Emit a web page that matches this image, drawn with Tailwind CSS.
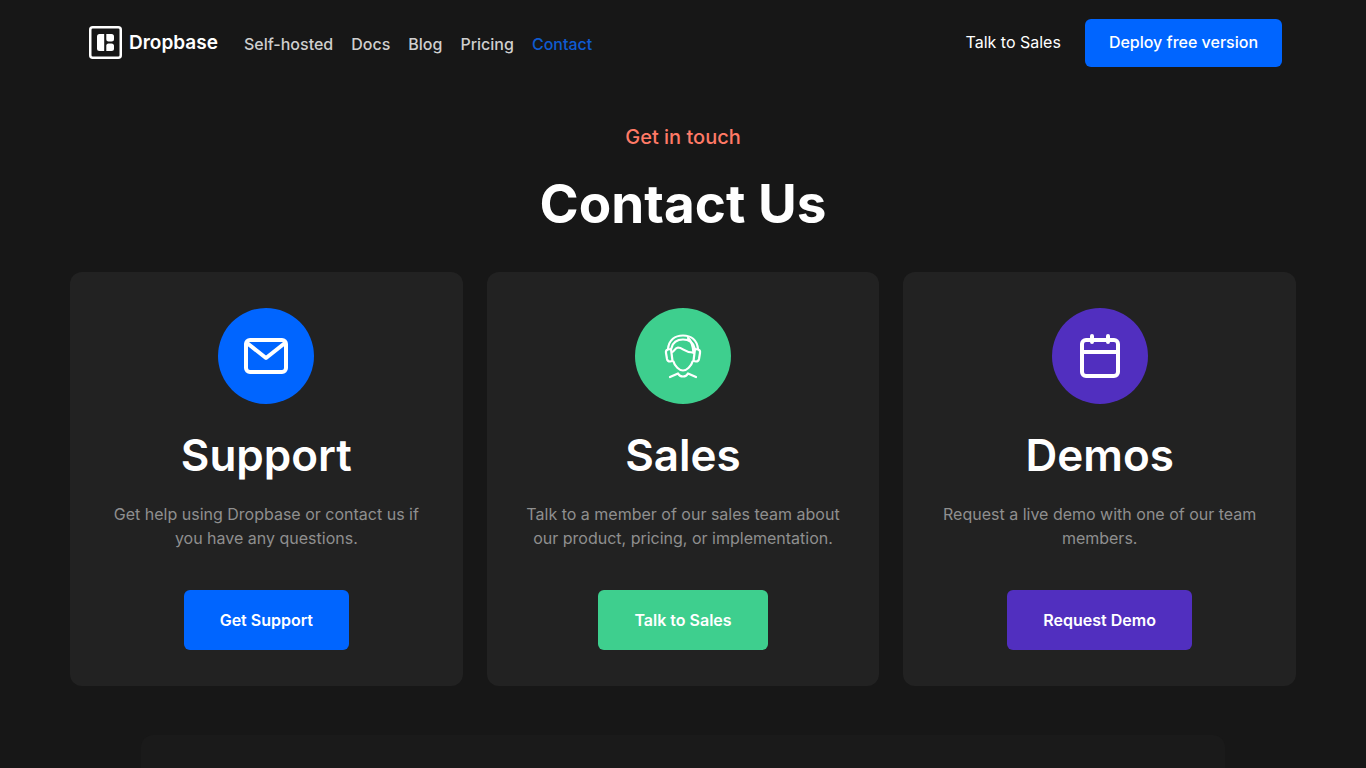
<!DOCTYPE html>
<html lang="en">
<head>
    <meta charset="UTF-8">
    <meta name="viewport" content="width=device-width, initial-scale=1.0">
    <title>Contact Us - Dropbase</title>
    <script src="https://cdn.jsdelivr.net/npm/@tailwindcss/browser@4"></script>
</head>
<body class="flex min-h-screen flex-col bg-[#171717] font-['Inter',sans-serif] text-white">
    <!-- Navigation -->
    <header class="flex items-center justify-between pt-[19px] pr-[84px] pl-[89px]">
        <div class="flex items-center pb-0.5">
            <a href="#" class="flex items-center gap-[7px] text-[19px] font-semibold">
                <svg class="size-[33px]" viewBox="0 0 33 33" fill="none" aria-hidden="true">
                    <rect x="1.25" y="1.25" width="30.5" height="30.5" rx="2.5" stroke="#fff" stroke-width="2.5" />
                    <path d="M10.5 8H15.2V25H10.5Q8 25 8 22.5V10.5Q8 8 10.5 8Z" fill="#fff" />
                    <path d="M17.3 8H22.5Q25 8 25 10.5V13Q25 15.5 22.5 15.5H19.5Q17.3 15.5 17.3 13.5Z" fill="#fff" />
                    <path d="M17.3 25H22.5Q25 25 25 22.5V20Q25 17.5 22.5 17.5H19.5Q17.3 17.5 17.3 19.5Z" fill="#fff" />
                </svg>
                <span class="pt-[3px]">Dropbase</span>
            </a>
            <nav class="ml-[26px] flex gap-[18px] pt-[3px] font-medium text-[#cfcfcf]">
                <a href="#">Self-hosted</a>
                <a href="#">Docs</a>
                <a href="#">Blog</a>
                <a href="#">Pricing</a>
                <a href="#" class="text-[#0f5bd0]">Contact</a>
            </nav>
        </div>
        <div class="flex items-center gap-6">
            <a href="#" class="pb-0.5">Talk to Sales</a>
            <button type="button" class="h-12 rounded-md bg-[#0065ff] px-6 pb-0.5 font-medium">Deploy free version</button>
        </div>
    </header>

    <main class="flex flex-1 flex-col">
        <div class="pt-[54px] text-center">
            <p class="text-xl leading-8 font-medium text-[#ff7a66]">Get in touch</p>
            <h1 class="mt-[18px] text-[53px] leading-[66px] font-bold">Contact Us</h1>
        </div>

        <!-- Contact options -->
        <div class="mt-[35px] grid grid-cols-3 gap-6 px-[70px]">
            <section class="flex flex-col items-center rounded-xl bg-[#222222] p-9 text-center">
                <div class="flex size-24 items-center justify-center rounded-full bg-[#0065ff]">
                    <svg class="size-12" viewBox="0 0 48 48" fill="none" stroke="#fff" stroke-width="4" stroke-linejoin="round" aria-hidden="true">
                        <rect x="4" y="8" width="40" height="32" rx="4" />
                        <path d="M5 11L24 26L43 11" />
                    </svg>
                </div>
                <h2 class="mt-6 text-[44px] leading-[54px] font-semibold">Support</h2>
                <p class="mt-5 text-[#8f8f8f]">Get help using Dropbase or contact us if you have any questions.</p>
                <button type="button" class="mt-10 h-[60px] rounded-md bg-[#0065ff] px-9 font-semibold">Get Support</button>
            </section>

            <section class="flex flex-col items-center rounded-xl bg-[#222222] p-9 text-center">
                <div class="flex size-24 items-center justify-center rounded-full bg-[#3ecf8e]">
                    <svg class="size-12" viewBox="0 0 48 48" fill="none" stroke="#fff" stroke-width="2.2" stroke-linecap="round" stroke-linejoin="round" aria-hidden="true">
                        <path d="M9 17C10 8 16 3.500 24 3.500S38 8 39 17" />
                        <path d="M12.500 16C14 10 18 7.500 24 7.500S34 10 35.500 16" />
                        <path d="M29 6C33 9 34 14 34.500 21" />
                        <path d="M9 17.500L12 17L13.500 29L11 29.500Q8.500 29.500 8 27L7 21Q6.500 18 9 17.500Z" />
                        <path d="M39 17.500L36 17L34.500 29L37 29.500Q39.500 29.500 40 27L41 21Q41.500 18 39 17.500Z" />
                        <path d="M13.500 20C14.500 20 16 16 19 15.500C24 15.500 26 21 34.500 20.500" />
                        <path d="M14.500 29.500C15.500 34 20.500 38.500 24 38.500S32.500 34 33.500 29.500" />
                        <path d="M11 45L19 41.500C21 45.500 27 45.500 29 41.500L37 45" />
                    </svg>
                </div>
                <h2 class="mt-6 text-[44px] leading-[54px] font-semibold">Sales</h2>
                <p class="mt-5 text-[#8f8f8f]">Talk to a member of our sales team about our product, pricing, or implementation.</p>
                <button type="button" class="mt-10 h-[60px] rounded-md bg-[#3ecf8e] px-9 font-semibold">Talk to Sales</button>
            </section>

            <section class="flex flex-col items-center rounded-xl bg-[#222222] p-9 text-center">
                <div class="flex size-24 items-center justify-center rounded-full bg-[#512fbf]">
                    <svg class="size-12" viewBox="0 0 48 48" fill="none" stroke="#fff" stroke-width="4" stroke-linecap="round" stroke-linejoin="round" aria-hidden="true">
                        <rect x="6" y="8" width="36" height="36" rx="4" />
                        <path d="M16 4V10M32 4V10M6 20H42" />
                    </svg>
                </div>
                <h2 class="mt-6 text-[44px] leading-[54px] font-semibold">Demos</h2>
                <p class="mt-5 text-[#8f8f8f]">Request a live demo with one of our team members.</p>
                <button type="button" class="mt-10 h-[60px] rounded-md bg-[#512fbf] px-9 font-semibold">Request Demo</button>
            </section>
        </div>

        <div class="mx-[141px] mt-[49px] flex-1 rounded-t-xl bg-[#1a1a1a]"></div>
    </main>
</body>
</html>
